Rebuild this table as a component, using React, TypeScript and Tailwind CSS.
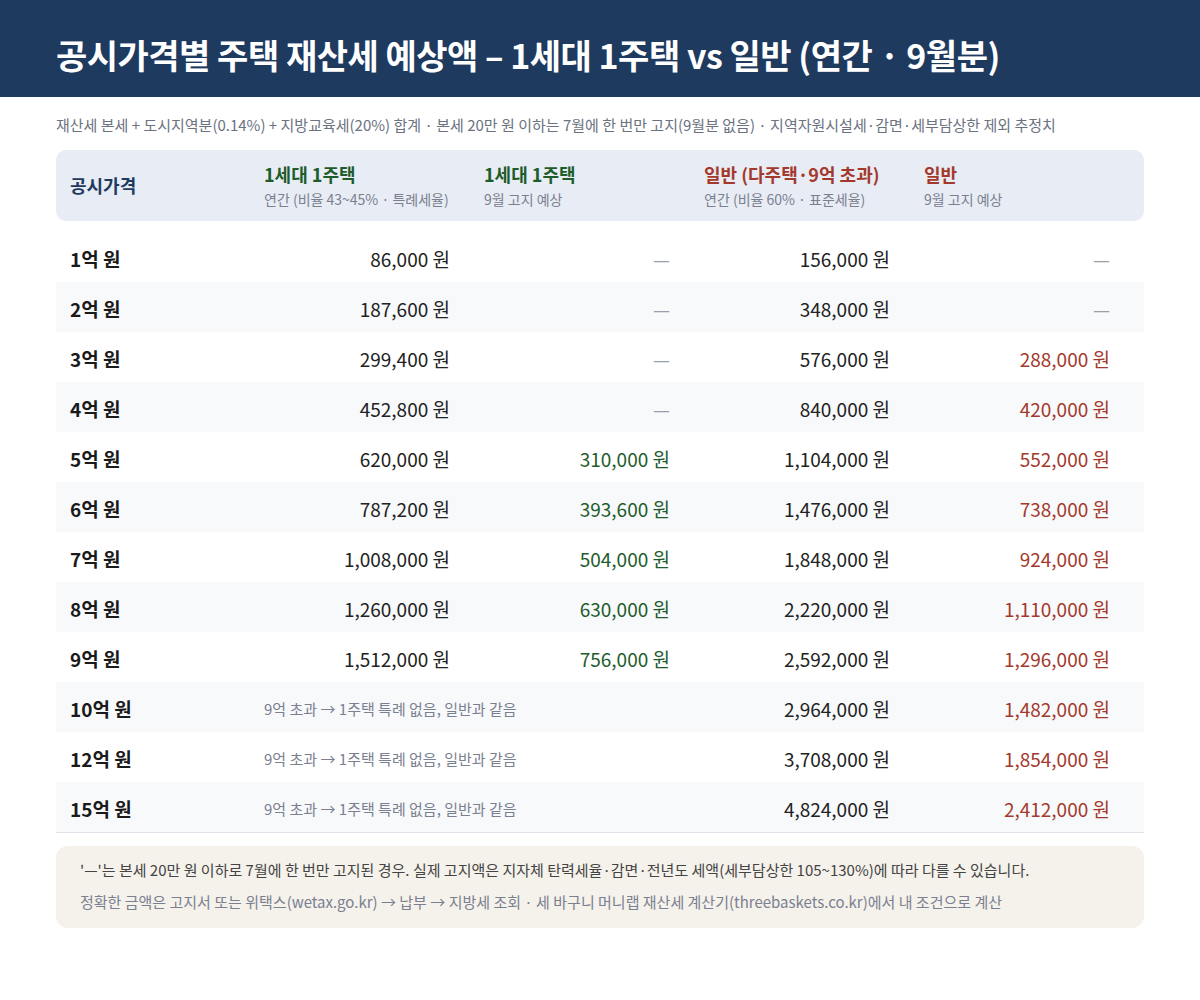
import React from "react";

type Row = {
  label: string;
  single: string | null;
  singleSep: string | null;
  general: string;
  generalSep: string | null;
  span?: boolean;
};

const rows: Row[] = [
  { label: "1억 원", single: "86,000", singleSep: null, general: "156,000", generalSep: null },
  { label: "2억 원", single: "187,600", singleSep: null, general: "348,000", generalSep: null },
  { label: "3억 원", single: "299,400", singleSep: null, general: "576,000", generalSep: "288,000" },
  { label: "4억 원", single: "452,800", singleSep: null, general: "840,000", generalSep: "420,000" },
  { label: "5억 원", single: "620,000", singleSep: "310,000", general: "1,104,000", generalSep: "552,000" },
  { label: "6억 원", single: "787,200", singleSep: "393,600", general: "1,476,000", generalSep: "738,000" },
  { label: "7억 원", single: "1,008,000", singleSep: "504,000", general: "1,848,000", generalSep: "924,000" },
  { label: "8억 원", single: "1,260,000", singleSep: "630,000", general: "2,220,000", generalSep: "1,110,000" },
  { label: "9억 원", single: "1,512,000", singleSep: "756,000", general: "2,592,000", generalSep: "1,296,000" },
  { label: "10억 원", single: null, singleSep: null, general: "2,964,000", generalSep: "1,482,000", span: true },
  { label: "12억 원", single: null, singleSep: null, general: "3,708,000", generalSep: "1,854,000", span: true },
  { label: "15억 원", single: null, singleSep: null, general: "4,824,000", generalSep: "2,412,000", span: true },
];

const font = { fontFamily: '"Noto Sans CJK KR", "Noto Sans", sans-serif' };

function Dash() {
  return <span className="text-[#9aa0aa]">—</span>;
}

function Cell({ value, color }: { value: string | null; color: string }) {
  return (
    <div className={`text-right pr-5 text-[19px] ${color}`}>
      {value ? `${value} 원` : <Dash />}
    </div>
  );
}

export default function App() {
  return (
    <div className="w-[1200px] min-h-[1000px] bg-white" style={font}>
      <header className="h-[97px] bg-[#1f3a5f] px-14 pt-[33px]">
        <h1 className="text-white text-[34px] font-bold leading-[44px] tracking-[-0.5px]">
          공시가격별 주택 재산세 예상액 – 1세대 1주택 vs 일반 (연간 · 9월분)
        </h1>
      </header>

      <div className="px-14">
        <p className="mt-[17px] text-[15px] leading-[22px] text-[#6b7280]">
          재산세 본세 + 도시지역분(0.14%) + 지방교육세(20%) 합계 · 본세 20만 원 이하는 7월에 한 번만 고지(9월분 없음) · 지역자원시설세·감면·세부담상한 제외 추정치
        </p>

        <div className="mt-[14px] h-[71px] rounded-[10px] bg-[#e8ecf4] grid grid-cols-[194px_220px_220px_220px_220px] items-center">
          <div className="pl-[14px] text-[18px] font-bold text-[#1f3a5f]">공시가격</div>
          <div className="pl-[14px]">
            <div className="text-[18px] font-bold text-[#1e5c2c] leading-6">1세대 1주택</div>
            <div className="mt-[3px] text-[14px] text-[#7a8090] leading-5">연간 (비율 43~45% · 특례세율)</div>
          </div>
          <div className="pl-[14px]">
            <div className="text-[18px] font-bold text-[#1e5c2c] leading-6">1세대 1주택</div>
            <div className="mt-[3px] text-[14px] text-[#7a8090] leading-5">9월 고지 예상</div>
          </div>
          <div className="pl-[14px]">
            <div className="text-[18px] font-bold text-[#a3392c] leading-6">일반 (다주택·9억 초과)</div>
            <div className="mt-[3px] text-[14px] text-[#7a8090] leading-5">연간 (비율 60% · 표준세율)</div>
          </div>
          <div className="pl-[14px]">
            <div className="text-[18px] font-bold text-[#a3392c] leading-6">일반</div>
            <div className="mt-[3px] text-[14px] text-[#7a8090] leading-5">9월 고지 예상</div>
          </div>
        </div>

        <div className="mt-[11px] border-b border-[#dfe3ea]">
          {rows.map((r, i) => (
            <div
              key={r.label}
              className={`h-[50px] pt-[4px] grid grid-cols-[194px_220px_220px_220px_220px] items-center ${
                i % 2 === 1 ? "bg-[#f8f9fb]" : "bg-white"
              }`}
            >
              <div className="pl-[14px] text-[19px] font-bold text-[#1a1a1a]">{r.label}</div>
              {r.span ? (
                <div className="col-span-2 pl-[14px] text-[15px] text-[#7a8090]">
                  9억 초과 → 1주택 특례 없음, 일반과 같음
                </div>
              ) : (
                <>
                  <Cell value={r.single} color="text-[#222]" />
                  <Cell value={r.singleSep} color="text-[#1e5c2c]" />
                </>
              )}
              <Cell value={r.general} color="text-[#222]" />
              <Cell value={r.generalSep} color="text-[#a3392c]" />
            </div>
          ))}
        </div>

        <div className="mt-[13px] rounded-[12px] bg-[#f5f1eb] pl-6 pt-2 pb-[10px] text-[15px] leading-8">
          <p className="text-[#444]">
            '—'는 본세 20만 원 이하로 7월에 한 번만 고지된 경우. 실제 고지액은 지자체 탄력세율·감면·전년도 세액(세부담상한 105~130%)에 따라 다를 수 있습니다.
          </p>
          <p className="text-[#7a8090]">
            정확한 금액은 고지서 또는 위택스(wetax.go.kr) → 납부 → 지방세 조회 · 세 바구니 머니랩 재산세 계산기(threebaskets.co.kr)에서 내 조건으로 계산
          </p>
        </div>
      </div>
    </div>
  );
}
